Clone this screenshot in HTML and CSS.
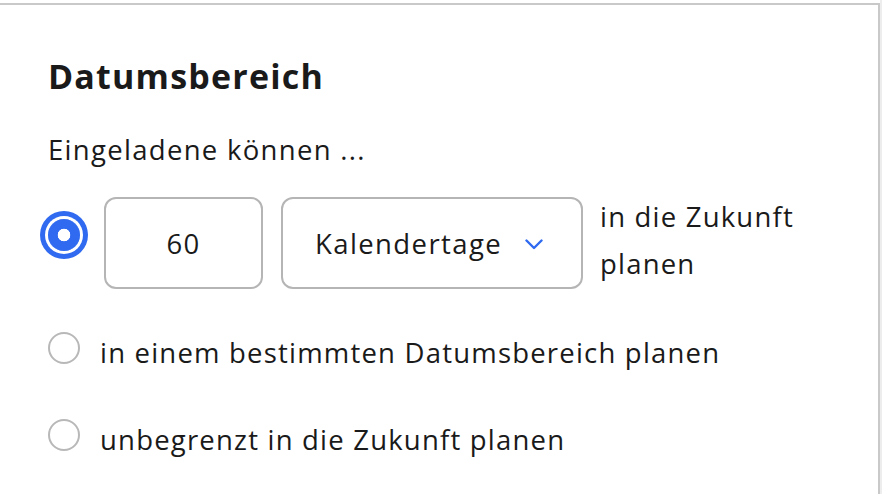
FILE: index.html
```html
<!DOCTYPE html>
<html lang="de">
<head>
<meta charset="utf-8">
<title>Datumsbereich</title>
<link rel="stylesheet" href="styles.css">
</head>
<body>
<div class="page">
  <section class="panel">
    <h2 class="title">Datumsbereich</h2>
    <p class="lead">Eingeladene können ...</p>
    <div class="options">
      <div class="option option-range">
        <span class="radio radio-checked"></span>
        <div class="field field-num">60</div>
        <div class="field field-select">
          <span class="select-text">Kalendertage</span>
          <svg class="chevron" width="18" height="11" viewBox="0 0 18 11" aria-hidden="true"><path d="M1.5 1.5 L9 9 L16.5 1.5" fill="none" stroke="#2f6af0" stroke-width="2.4" stroke-linecap="round" stroke-linejoin="round"/></svg>
        </div>
        <div class="suffix">in die Zukunft<br>planen</div>
      </div>
      <div class="option">
        <span class="radio"></span>
        <span class="label">in einem bestimmten Datumsbereich planen</span>
      </div>
      <div class="option">
        <span class="radio"></span>
        <span class="label">unbegrenzt in die Zukunft planen</span>
      </div>
    </div>
  </section>
</div>
</body>
</html>
```

FILE: styles.css
```css
html, body {
  margin: 0;
  padding: 0;
  background: #ffffff;
}

body {
  font-family: "Open Sans", "Liberation Sans", sans-serif;
  color: #1a1a1a;
}

.page {
  display: flex;
  padding-top: 3px;
  background: linear-gradient(to right, #ffffff 880px, #ededed 880px);
  min-height: 491px;
}

.panel {
  box-sizing: border-box;
  width: 880px;
  min-height: 491px;
  background: #ffffff;
  border-top: 2px solid #c9c9c9;
  border-right: 2px solid #c9c9c9;
  padding: 51px 0 0 48px;
}

.title {
  margin: 0;
  font-size: 34px;
  line-height: 40px;
  font-weight: 700;
  letter-spacing: 1.2px;
  color: #1a1a1a;
}

.lead {
  margin: 30px 0 0;
  font-size: 27.5px;
  line-height: 47px;
  letter-spacing: 1.3px;
}

.options {
  margin-top: 24px;
  display: flex;
  flex-direction: column;
  gap: 40px;
}

.option {
  display: flex;
  align-items: flex-start;
  font-size: 27.5px;
  line-height: 47px;
  letter-spacing: 1.2px;
}

.radio {
  box-sizing: border-box;
  flex: none;
  width: 32px;
  height: 32px;
  margin-top: 3px;
  border-radius: 50%;
  border: 2px solid #b8b8b8;
  background: #ffffff;
}

.radio-checked {
  margin-top: 22px;
  border: none;
  background: radial-gradient(circle, #ffffff 0 6px, #2f6af0 6.6px);
  box-shadow: 0 0 0 3px #ffffff, 0 0 0 8px #2f6af0;
}

.label {
  margin-left: 20px;
}

.field {
  box-sizing: border-box;
  height: 92px;
  border: 2px solid #b5b5b5;
  border-radius: 12px;
  display: flex;
  align-items: center;
}

.field-num {
  width: 159px;
  margin-left: 24px;
  justify-content: center;
}

.field-select {
  width: 302px;
  margin-left: 18px;
  padding: 0 38px 0 32px;
  justify-content: space-between;
  letter-spacing: 1.4px;
}

.chevron {
  display: block;
  margin-top: 2px;
}

.suffix {
  margin-left: 17px;
  margin-top: -4px;
}
```
